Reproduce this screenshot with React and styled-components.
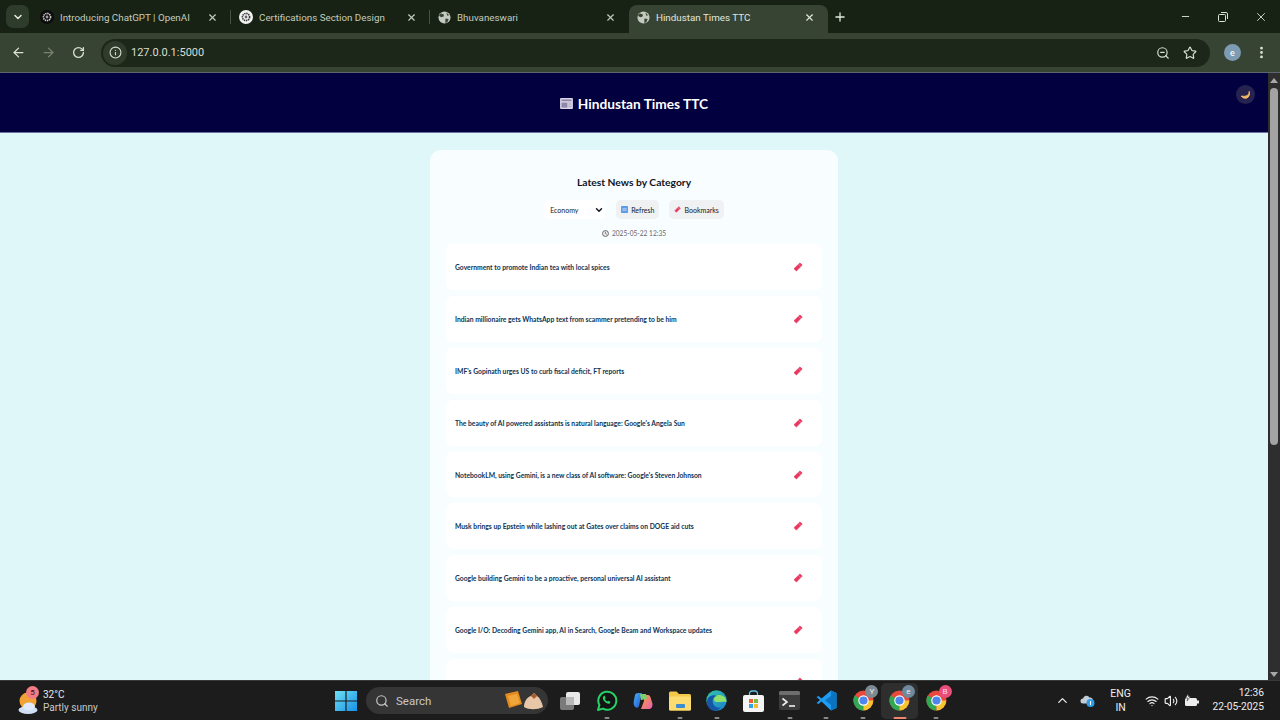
import React from 'react'
import styled, { createGlobalStyle } from 'styled-components'
import { ArrowLeft, ArrowRight, RotateCw, Info, ZoomOut, Star, EllipsisVertical, X, Plus, ChevronDown, Minus, Search, ChevronUp, Wifi, Volume2 } from 'lucide-react'

const news = [
  'Government to promote Indian tea with local spices',
  'Indian millionaire gets WhatsApp text from scammer pretending to be him',
  "IMF's Gopinath urges US to curb fiscal deficit, FT reports",
  "The beauty of AI powered assistants is natural language: Google's Angela Sun",
  "NotebookLM, using Gemini, is a new class of AI software: Google's Steven Johnson",
  'Musk brings up Epstein while lashing out at Gates over claims on DOGE aid cuts',
  'Google building Gemini to be a proactive, personal universal AI assistant',
  'Google I/O: Decoding Gemini app, AI in Search, Google Beam and Workspace updates',
  '',
]

const tabs = [
  { title: 'Introducing ChatGPT | OpenAI', icon: 'dark' },
  { title: 'Certifications Section Design', icon: 'light' },
  { title: 'Bhuvaneswari', icon: 'globe' },
  { title: 'Hindustan Times TTC', icon: 'globe', active: true },
]

const GlobalStyle = createGlobalStyle`
  html, body { margin: 0; padding: 0; height: 100%; overflow: hidden; }
  body { font-family: "Lato", "Liberation Sans", sans-serif; }
  * { box-sizing: border-box; }
`

const Screen = styled.div`
  width: 1280px;
  height: 720px;
  display: flex;
  flex-direction: column;
  overflow: hidden;
  background: #1b2618;
`

const TabStrip = styled.div`
  height: 33px;
  flex: none;
  display: flex;
  align-items: flex-end;
  padding-left: 6px;
  background: #172214;
  font-family: "Roboto", "Liberation Sans", sans-serif;
`

const TabMenu = styled.div`
  width: 23px;
  height: 23px;
  margin: 0 3px 5px 0;
  border-radius: 7px;
  background: #2e3c2b;
  display: flex;
  align-items: center;
  justify-content: center;
  color: #e4e9df;
`

const Tab = styled.div`
  width: 199px;
  height: 28px;
  flex: none;
  display: flex;
  align-items: center;
  gap: 6px;
  padding: 0 13px 4px 8px;
  font-size: 9.8px;
  border-radius: 8px 8px 0 0;
  position: relative;
  background: ${p => (p.$active ? '#374433' : 'transparent')};
  color: ${p => (p.$active ? '#e1e6dc' : '#c3cbbd')};
  &::after {
    content: '';
    position: absolute;
    right: 0;
    top: 5px;
    height: 14px;
    width: 1px;
    background: ${p => (p.$sep ? '#46523f' : 'transparent')};
  }
`

const TabTitle = styled.span`
  flex: 1;
  white-space: nowrap;
  overflow: hidden;
`

const NewTab = styled.div`
  width: 24px;
  height: 28px;
  padding-bottom: 5px;
  display: flex;
  align-items: center;
  justify-content: center;
  color: #e4e9df;
`

const WindowButtons = styled.div`
  margin-left: auto;
  height: 33px;
  display: flex;
  align-items: center;
  color: #dfe4da;
`

const WindowButton = styled.div`
  width: 38px;
  display: flex;
  justify-content: center;
`

const Toolbar = styled.div`
  height: 40px;
  flex: none;
  display: flex;
  align-items: center;
  padding: 0 8px 0 3px;
  background: #374433;
  border-bottom: 1px solid #5c6770;
  color: #dbe1d6;
`

const NavButton = styled.div`
  width: 30px;
  display: flex;
  justify-content: center;
  color: ${p => (p.$off ? '#79836f' : '#dbe1d6')};
`

const Omnibox = styled.div`
  width: 1109px;
  height: 28px;
  margin-left: 8px;
  border-radius: 14px;
  background: #1c2719;
  display: flex;
  align-items: center;
  color: #d9dfd3;
  font-family: "Roboto", "Liberation Sans", sans-serif;
  font-size: 11px;
`

const SiteInfo = styled.div`
  width: 24px;
  height: 24px;
  margin: 0 4px 0 2px;
  border-radius: 50%;
  background: #2f3b2b;
  display: flex;
  align-items: center;
  justify-content: center;
`

const OmniIcons = styled.div`
  margin-left: auto;
  padding-right: 13px;
  display: flex;
  gap: 13px;
  align-items: center;
`

const Avatar = styled.div`
  width: 17px;
  height: 17px;
  margin-left: 14px;
  border-radius: 50%;
  background: #7d9bb2;
  color: #f2f5f7;
  font-size: 9px;
  font-weight: 700;
  display: flex;
  align-items: center;
  justify-content: center;
`

const MenuDots = styled.div`
  margin-left: 13px;
  display: flex;
`

const Viewport = styled.div`
  height: 607px;
  flex: none;
  display: flex;
  overflow: hidden;
`

const Page = styled.div`
  flex: 1;
  background: #e0f7fa;
  overflow: hidden;
`

const Header = styled.header`
  height: 60px;
  position: relative;
  background: #03003f;
  border-bottom: 1px solid #6a70a0;
  display: flex;
  align-items: center;
  justify-content: center;
  gap: 5px;
  color: #fff;
  font-weight: 700;
  font-size: 13.7px;
  padding-top: 2px;
`

const ThemeToggle = styled.div`
  position: absolute;
  top: 12px;
  right: 13px;
  width: 19px;
  height: 19px;
  border-radius: 50%;
  background: #262350;
  display: flex;
  align-items: center;
  justify-content: center;
`

const Panel = styled.main`
  width: 408px;
  margin: 17px auto 0;
  padding: 26px 16px 0;
  background: #f8fdff;
  border-radius: 11px;
  display: flex;
  flex-direction: column;
  align-items: center;
`

const Heading = styled.h2`
  margin: 0;
  font-size: 10.3px;
  line-height: 13px;
  font-weight: 700;
  color: #10131c;
`

const Controls = styled.div`
  margin-top: 11px;
  display: flex;
  align-items: center;
  gap: 10px;
`

const CategorySelect = styled.div`
  width: 62px;
  height: 19px;
  padding: 0 2px 0 6px;
  display: flex;
  align-items: center;
  justify-content: space-between;
  background: #fff;
  border-radius: 5px;
  font-size: 7px;
  color: #14171f;
`

const ActionButton = styled.div`
  height: 19px;
  padding: 0 5px;
  display: flex;
  align-items: center;
  gap: 3px;
  border-radius: 5px;
  background: #f0f1f3;
  font-size: 7px;
  color: #14171f;
`

const Timestamp = styled.div`
  margin-top: 10px;
  display: flex;
  align-items: center;
  gap: 3px;
  font-size: 6.6px;
  line-height: 9px;
  color: #62676e;
`

const NewsList = styled.ul`
  width: 100%;
  list-style: none;
  margin: 6px 0 0;
  padding: 0;
  display: flex;
  flex-direction: column;
  gap: 6px;
`

const NewsItem = styled.li`
  height: 45.9px;
  flex: none;
  padding: 0 19px 0 9px;
  display: flex;
  align-items: center;
  justify-content: space-between;
  background: #fff;
  border-radius: 7px;
  font-size: 6.75px;
  font-weight: 700;
  color: #0d3354;
`

const Scrollbar = styled.div`
  width: 12px;
  flex: none;
  background: #2e2e2e;
  display: flex;
  flex-direction: column;
  align-items: center;
  padding-top: 5px;
`

const ScrollThumb = styled.div`
  width: 8px;
  height: 357px;
  margin-top: 5px;
  border-radius: 4px;
  background: #a3a3a3;
`

const ScrollArrow = styled.div`
  width: 0;
  height: 0;
  border-left: 4px solid transparent;
  border-right: 4px solid transparent;
  ${p => (p.$down ? 'border-top: 5px solid #a8a8a8; margin-top: auto; margin-bottom: 3px;' : 'border-bottom: 5px solid #a8a8a8;')}
`

const Taskbar = styled.footer`
  height: 40px;
  flex: none;
  display: flex;
  align-items: center;
  background: #1c1c1c;
  border-top: 1px solid #383838;
  color: #f0f0f0;
  font-family: "Roboto", "Liberation Sans", sans-serif;
`

const Weather = styled.div`
  width: 335px;
  flex: none;
  padding-left: 18px;
  display: flex;
  align-items: center;
  gap: 5px;
`

const WeatherIcon = styled.div`
  width: 20px;
  height: 28px;
  position: relative;
  display: flex;
  align-items: flex-end;
`

const Badge = styled.span`
  position: absolute;
  top: ${p => p.$top}px;
  right: ${p => p.$right}px;
  width: 13px;
  height: 13px;
  border-radius: 50%;
  background: ${p => p.$bg};
  color: ${p => p.$fg};
  font-size: 8px;
  line-height: 13px;
  text-align: center;
`

const WeatherText = styled.div`
  font-size: 10px;
  line-height: 13px;
  color: #e9e9e9;
  span {
    display: block;
    color: #c9c9c9;
  }
`

const StartButton = styled.div`
  width: 22px;
  height: 20px;
  flex: none;
  margin-right: 9px;
  display: flex;
`

const SearchBox = styled.div`
  width: 182px;
  height: 27px;
  flex: none;
  padding-left: 9px;
  display: flex;
  align-items: center;
  gap: 7px;
  border-radius: 14px;
  background: #353535;
  font-size: 11.5px;
  color: #c9c9c9;
`

const SearchArt = styled.div`
  margin-left: auto;
  margin-right: 4px;
  display: flex;
`

const Apps = styled.div`
  margin-left: 4px;
  display: flex;
`

const AppSlot = styled.div`
  width: 36.6px;
  height: 36px;
  flex: none;
  position: relative;
  display: flex;
  align-items: center;
  justify-content: center;
  border-radius: 5px;
  background: ${p => (p.$active ? '#2e2e2e' : 'transparent')};
  &::after {
    content: '';
    position: absolute;
    bottom: 0;
    left: 50%;
    transform: translateX(-50%);
    width: ${p => (p.$active ? 13 : 5)}px;
    height: 2px;
    border-radius: 1px;
    background: ${p => (p.$active ? '#f0846c' : p.$open ? '#8a8a8a' : 'transparent')};
  }
`

const Tray = styled.div`
  margin-left: auto;
  padding-right: 16px;
  display: flex;
  align-items: center;
  color: #eee;
`

const TrayIcon = styled.div`
  display: flex;
  margin-right: ${p => p.$gap ?? 0}px;
`

const Lang = styled.div`
  width: 30px;
  margin-right: 9px;
  font-size: 10.5px;
  line-height: 14px;
  text-align: center;
`

const Clock = styled.div`
  margin-left: 13px;
  font-size: 10.2px;
  line-height: 14px;
  text-align: right;
  padding-bottom: 1px;
`

const TabFavicon = ({ kind }) => {
  if (kind === 'globe') {
    return (
      <svg width="13" height="13" viewBox="0 0 14 14">
        <circle cx="7" cy="7" r="6.5" fill="#c4cac0" />
        <path d="M3 2.5 6.5 4 6 6 3.5 6.8 1 5ZM8 8l3.5.5L10 12.2 7.8 13ZM9 1.5l3 3-2 .5Z" fill="#374433" />
      </svg>
    )
  }
  const dark = kind === 'dark'
  return (
    <svg width="14" height="14" viewBox="0 0 14 14">
      <circle cx="7" cy="7" r="7" fill={dark ? '#0c0c0c' : '#f2f2f2'} />
      <circle cx="7" cy="7" r="3.6" fill="none" stroke={dark ? '#d0d0d0' : '#333'} strokeWidth="1.6" strokeDasharray="1.4 .7" />
      <circle cx="7" cy="7" r="1.4" fill={dark ? '#a0a0a0' : '#666'} />
    </svg>
  )
}

const Newspaper = () => (
  <svg width="13" height="11" viewBox="0 0 14 12">
    <rect width="14" height="12" rx="1" fill="#dcd6ea" />
    <rect x="1.5" y="1.5" width="11" height="2" fill="#8d88a8" />
    <rect x="1.5" y="5" width="6.5" height="5.5" fill="#8d88a8" />
    <path d="M9 5.5h3.5M9 7.5h3.5M9 9.5h3.5" stroke="#a8a3bd" />
  </svg>
)

const Moon = () => (
  <svg width="11" height="11" viewBox="0 0 10 10">
    <path d="M8.4 2.2C8.6 5.600 5.600 7.400 1.200 6.400 3.200 9.800 9.800 9.200 8.400 2.200Z" fill="#f3b964" stroke="#f3b964" strokeWidth=".9" strokeLinejoin="round" />
  </svg>
)

const Tag = ({ size = 10 }) => (
  <svg width={size} height={size} viewBox="0 0 10 10">
    <path d="M7 .9 9.200 3.100 3.400 9 1 6.700Z" fill="#e8385f" stroke="#e8385f" strokeWidth=".7" strokeLinejoin="round" />
    <path d="M5.600 2.400 7.700 4.500" stroke="#f6a0b2" strokeWidth=".7" />
  </svg>
)

const RefreshGlyph = () => (
  <svg width="7" height="7" viewBox="0 0 8 8">
    <rect width="8" height="8" rx="1" fill="#5b9bea" />
    <path d="M1.500 3.200h5M6.500 4.800h-5" stroke="#dbe9fb" strokeWidth=".8" />
  </svg>
)

const ClockGlyph = () => (
  <svg width="7" height="7" viewBox="0 0 8 8">
    <circle cx="4" cy="4" r="3.400" fill="#e8e8e8" stroke="#4e4e4e" strokeWidth=".9" />
    <path d="M4 2v2.200l1.400.6" fill="none" stroke="#4e4e4e" strokeWidth=".7" />
  </svg>
)

const RestoreIcon = () => (
  <svg width="10" height="10" viewBox="0 0 10 10" fill="none" stroke="currentColor">
    <rect x=".5" y="2.500" width="7" height="7" rx="1" />
    <path d="M3 .5h5a1.500 1.500 0 0 1 1.500 1.500v5" />
  </svg>
)

const WindowsLogo = () => (
  <svg width="22" height="20" viewBox="0 0 22 20">
    <defs>
      <linearGradient id="win" x1="0" y1="0" x2="1" y2="1">
        <stop offset="0" stopColor="#6fe0f5" />
        <stop offset="1" stopColor="#1690e6" />
      </linearGradient>
    </defs>
    <path d="M0 0h10.400v9.400H0ZM11.600 0H22v9.400H11.600ZM0 10.600h10.400V20H0ZM11.600 10.600H22V20H11.600Z" fill="url(#win)" />
  </svg>
)

const WeatherGlyph = () => (
  <svg width="20" height="24" viewBox="0 0 20 24">
    <circle cx="10" cy="10" r="8.500" fill="#f2a134" />
    <ellipse cx="10" cy="19" rx="9.500" ry="4" fill="#cfe0f5" />
    <ellipse cx="11" cy="15.500" rx="6" ry="4" fill="#dfeafa" />
  </svg>
)

const SearchDoodle = () => (
  <svg width="39" height="20" viewBox="0 0 39 20">
    <path d="M0 3 13 0l4 13-13 4Z" fill="#e58a1f" />
    <path d="M3 5 12 3l3 9-9 3Z" fill="#f0a63a" />
    <path d="M19 16c0-5 3-10 7-11l3-3 3 3c3 2 5 6 6 11-6 3-14 3-19 0Z" fill="#e8c6a8" />
    <path d="M26 5l3-3 3 3-3 3Z" fill="#a85f2c" />
  </svg>
)

const TaskView = () => (
  <svg width="20" height="18" viewBox="0 0 20 18">
    <rect y="5" width="14" height="13" rx="2" fill="#7a7a7a" />
    <rect x="6" y="0" width="14" height="13" rx="2" fill="#e8e8e8" />
    <rect x="6" y="5" width="8" height="8" fill="#b8b8b8" />
  </svg>
)

const WhatsApp = () => (
  <svg width="22" height="22" viewBox="0 0 22 22">
    <path d="M2 20l1.400-5A9 9 0 1 1 7 18.600Z" fill="#141414" stroke="#25d366" strokeWidth="2" strokeLinejoin="round" />
    <path d="M7.600 6.200c-1.400 1.200-.8 3.400 1 5.400s4 2.800 5.400 1.600l.4-1.400-2.200-1.100-.9.9c-1-.4-2-1.400-2.500-2.500l.8-.9L8.800 5.600Z" fill="#25d366" />
  </svg>
)

const Copilot = () => (
  <svg width="20" height="18" viewBox="0 0 20 18">
    <defs>
      <linearGradient id="copa" x1="0" y1="0" x2="1" y2="1">
        <stop offset="0" stopColor="#3fb0f2" />
        <stop offset="1" stopColor="#2a55d8" />
      </linearGradient>
      <linearGradient id="copb" x1="0" y1="0" x2="1" y2="1">
        <stop offset="0" stopColor="#f6a13c" />
        <stop offset="1" stopColor="#e85fb0" />
      </linearGradient>
    </defs>
    <path d="M5 1h4l-1.500 6L6 14c-.4 1.500-2 2-3 1.500C1 14.500 0 12 1 8l1-5c.3-1.200 1.500-2 3-2Z" fill="url(#copa)" />
    <path d="M11 3h4c1.200 0 2 .8 2.400 2l2 6.500c.5 3-1 5.500-3.400 5.500H8l3-8Z" fill="url(#copb)" />
    <path d="M7 2h6l1 5-6 1Z" fill="#7ad06c" />
  </svg>
)

const Folder = () => (
  <svg width="22" height="20" viewBox="0 0 22 20">
    <path d="M0 2a1.500 1.500 0 0 1 1.500-1.500h6L10 3h10.500A1.500 1.500 0 0 1 22 4.500V18a1.500 1.500 0 0 1-1.500 1.500h-19A1.500 1.500 0 0 1 0 18Z" fill="#f5c84a" />
    <rect y="5.500" width="22" height="14" rx="1.500" fill="#fbdc70" />
    <rect x="7" y="13" width="9" height="4" rx="1" fill="#3d8bd0" />
  </svg>
)

const Edge = () => (
  <svg width="21" height="21" viewBox="0 0 21 21">
    <defs>
      <linearGradient id="edg" x1="0" y1="0" x2="1" y2="1">
        <stop offset="0" stopColor="#34c7a8" />
        <stop offset="1" stopColor="#1b7fd0" />
      </linearGradient>
    </defs>
    <circle cx="10.500" cy="10.500" r="10.200" fill="url(#edg)" />
    <path d="M20.500 12c0-5-4-7-7.500-7-3 0-5 2-5 4.500 0 1 .8 2 2 2.500h3c3 .2 5-.5 7.500 0Z" fill="#8ee26a" />
    <path d="M1 11c1-5 6-7 10-5-3 0-5 3-4 7 .7 3 4 5.500 8 4.500-2 2.500-5 3.500-8 3C3 20 .8 15 1 11Z" fill="#1556a8" />
  </svg>
)

const StoreIcon = () => (
  <svg width="21" height="22" viewBox="0 0 21 22">
    <path d="M6.500 5V3.500A2.500 2.500 0 0 1 9 1h3a2.500 2.500 0 0 1 2.500 2.500V5" fill="none" stroke="#5bc2e7" strokeWidth="1.300" />
    <rect x="0" y="5" width="21" height="17" rx="2" fill="#f4f4f4" />
    <rect x="6" y="9" width="4" height="4" fill="#ef5d3a" />
    <rect x="11" y="9" width="4" height="4" fill="#7cbc38" />
    <rect x="6" y="14" width="4" height="4" fill="#2ea6e6" />
    <rect x="11" y="14" width="4" height="4" fill="#f8bb2c" />
  </svg>
)

const Terminal = () => (
  <svg width="21" height="19" viewBox="0 0 21 19">
    <rect width="21" height="19" rx="2" fill="#3c3c3c" />
    <rect width="21" height="4" rx="1.500" fill="#6e6e6e" />
    <path d="M3.500 7.500 8 11l-4.500 3.500" fill="none" stroke="#f0f0f0" strokeWidth="1.600" />
    <path d="M10 15h6" stroke="#f0f0f0" strokeWidth="1.600" />
  </svg>
)

const VsCode = () => (
  <svg width="21" height="21" viewBox="0 0 21 21">
    <path d="M15 .5 20.500 3v15L15 20.500 5.500 11.500l-3 2.500L.5 13l3.500-3L.5 7l2-1 3 2.500Z" fill="#1f9cf0" />
    <path d="M15 .5 20.500 3v15L15 20.500 15 6 9 10.300 15 15Z" fill="#0a74c2" />
  </svg>
)

const ChromeLogo = () => (
  <svg width="21" height="21" viewBox="0 0 22 22">
    <circle cx="11" cy="11" r="10.500" fill="#e9483c" />
    <path d="M11 11 1.800 5.800A10.500 10.500 0 0 0 11 21.500Z" fill="#32a853" />
    <path d="M11 11h10.200A10.500 10.500 0 0 1 11 21.500Z" fill="#f7c62f" />
    <circle cx="11" cy="11" r="5.500" fill="#fff" />
    <circle cx="11" cy="11" r="4.300" fill="#4f86ec" />
  </svg>
)

const Cloud = () => (
  <svg width="15" height="15" viewBox="0 0 15 15">
    <path d="M3 10.500a2.500 2.500 0 0 1 0-5 3.500 3.500 0 0 1 6.500-1 3 3 0 0 1 1 6Z" fill="#c4ced8" />
    <circle cx="10.500" cy="10" r="4" fill="#2d9fe8" />
    <rect x="10" y="8" width="1" height="4" fill="#fff" />
  </svg>
)

const Battery = () => (
  <svg width="16" height="14" viewBox="0 0 16 14">
    <rect x="1" y="4" width="12" height="8" rx="1.500" fill="#eee" />
    <rect x="13" y="6.500" width="2" height="3" fill="#eee" />
    <path d="M4 0 1.500 4H4L3 7l3.500-4.500H4.500Z" fill="#eee" stroke="#1c1c1c" strokeWidth=".5" />
  </svg>
)

const App = () => {
  return (
    <Screen>
      <GlobalStyle />
      <TabStrip>
        <TabMenu>
          <ChevronDown size={12} strokeWidth={3} />
        </TabMenu>
        {tabs.map((t, i) => (
          <Tab key={t.title} $active={t.active} $sep={i < 2}>
            <TabFavicon kind={t.icon} />
            <TabTitle>{t.title}</TabTitle>
            <X size={11} strokeWidth={2.5} />
          </Tab>
        ))}
        <NewTab>
          <Plus size={14} strokeWidth={2.2} />
        </NewTab>
        <WindowButtons>
          <WindowButton><Minus size={11} /></WindowButton>
          <WindowButton><RestoreIcon /></WindowButton>
          <WindowButton><X size={14} strokeWidth={1.5} /></WindowButton>
        </WindowButtons>
      </TabStrip>
      <Toolbar>
        <NavButton><ArrowLeft size={15} /></NavButton>
        <NavButton $off><ArrowRight size={15} /></NavButton>
        <NavButton><RotateCw size={13} strokeWidth={2.4} /></NavButton>
        <Omnibox>
          <SiteInfo><Info size={13} /></SiteInfo>
          127.0.0.1:5000
          <OmniIcons>
            <ZoomOut size={14} />
            <Star size={14} />
          </OmniIcons>
        </Omnibox>
        <Avatar>e</Avatar>
        <MenuDots><EllipsisVertical size={15} strokeWidth={2.5} /></MenuDots>
      </Toolbar>
      <Viewport>
        <Page>
          <Header>
            <Newspaper />
            Hindustan Times TTC
            <ThemeToggle><Moon /></ThemeToggle>
          </Header>
          <Panel>
            <Heading>Latest News by Category</Heading>
            <Controls>
              <CategorySelect>
                Economy
                <ChevronDown size={10} strokeWidth={3.5} />
              </CategorySelect>
              <ActionButton><RefreshGlyph />Refresh</ActionButton>
              <ActionButton><Tag size={7} />Bookmarks</ActionButton>
            </Controls>
            <Timestamp><ClockGlyph />2025-05-22 12:35</Timestamp>
            <NewsList>
              {news.map((title, i) => (
                <NewsItem key={i}>
                  <span>{title}</span>
                  <Tag />
                </NewsItem>
              ))}
            </NewsList>
          </Panel>
        </Page>
        <Scrollbar>
          <ScrollArrow />
          <ScrollThumb />
          <ScrollArrow $down />
        </Scrollbar>
      </Viewport>
      <Taskbar>
        <Weather>
          <WeatherIcon>
            <WeatherGlyph />
            <Badge $top={-1} $right={-1} $bg="#f27b86" $fg="#3a1114">5</Badge>
          </WeatherIcon>
          <WeatherText>32°C<span>Partly sunny</span></WeatherText>
        </Weather>
        <StartButton><WindowsLogo /></StartButton>
        <SearchBox>
          <Search size={14} />
          Search
          <SearchArt><SearchDoodle /></SearchArt>
        </SearchBox>
        <Apps>
          <AppSlot><TaskView /></AppSlot>
          <AppSlot $open><WhatsApp /></AppSlot>
          <AppSlot><Copilot /></AppSlot>
          <AppSlot $open><Folder /></AppSlot>
          <AppSlot $open><Edge /></AppSlot>
          <AppSlot><StoreIcon /></AppSlot>
          <AppSlot $open><Terminal /></AppSlot>
          <AppSlot $open><VsCode /></AppSlot>
          <AppSlot $open>
            <ChromeLogo />
            <Badge $top={2} $right={3} $bg="#7d8a94" $fg="#eee">Y</Badge>
          </AppSlot>
          <AppSlot $active>
            <ChromeLogo />
            <Badge $top={2} $right={3} $bg="#71899c" $fg="#eee">e</Badge>
          </AppSlot>
          <AppSlot $open>
            <ChromeLogo />
            <Badge $top={2} $right={3} $bg="#ea4d79" $fg="#fde">B</Badge>
          </AppSlot>
        </Apps>
        <Tray>
          <TrayIcon $gap={10}><ChevronUp size={15} strokeWidth={2} /></TrayIcon>
          <TrayIcon $gap={11}><Cloud /></TrayIcon>
          <Lang>ENG<br />IN</Lang>
          <TrayIcon $gap={5}><Wifi size={14} /></TrayIcon>
          <TrayIcon $gap={6}><Volume2 size={14} /></TrayIcon>
          <TrayIcon><Battery /></TrayIcon>
          <Clock>12:36<br />22-05-2025</Clock>
        </Tray>
      </Taskbar>
    </Screen>
  )
}

export default App
